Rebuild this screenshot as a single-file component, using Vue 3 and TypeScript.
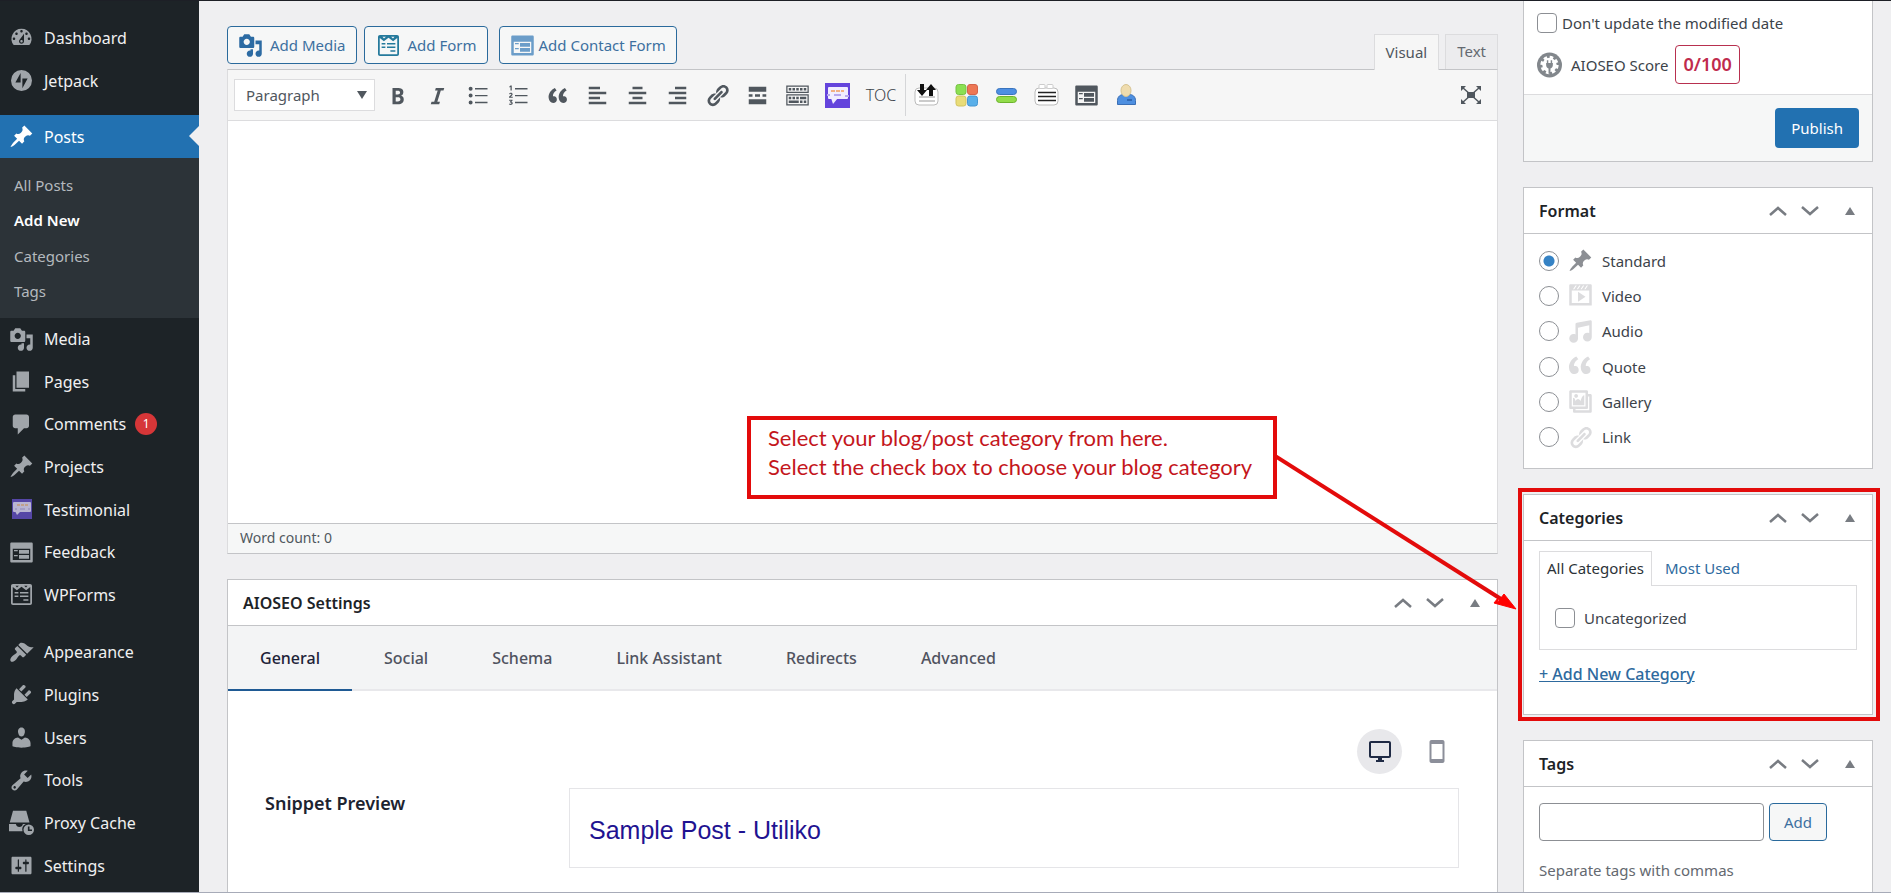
<script setup lang="ts">
import { ref } from 'vue'

interface MenuItem {
  label: string
  icon: string
  badge?: number
}

const paths: Record<string, string> = {
  dashboard:
    'M3.76 16h12.48A7.998 7.998 0 0 0 10 3a7.998 7.998 0 0 0-6.24 13zM10 4c.55 0 1 .45 1 1s-.45 1-1 1-1-.45-1-1 .45-1 1-1zM6 6c.55 0 1 .45 1 1s-.45 1-1 1-1-.45-1-1 .45-1 1-1zm8 0c.55 0 1 .45 1 1s-.45 1-1 1-1-.45-1-1 .45-1 1-1zm-5.37 5.55L12 7v6c0 1.1-.9 2-2 2s-2-.9-2-2c0-.57.24-1.08.63-1.45zM4 10c.55 0 1 .45 1 1s-.45 1-1 1-1-.45-1-1 .45-1 1-1zm12 0c.55 0 1 .45 1 1s-.45 1-1 1-1-.45-1-1 .45-1 1-1zm-5 3c0-.55-.45-1-1-1s-1 .45-1 1 .45 1 1 1 1-.45 1-1z',
  jetpack: 'M10 1.6a8.4 8.4 0 1 0 0 16.8 8.4 8.4 0 0 0 0-16.8zM9.3 11.6H5.1L9.3 4zm1.4 4.6V8.4h4.2z',
  pin:
    'M10.44 3.02l1.82-1.82 6.36 6.35-1.83 1.82c-1.05-.68-2.48-.57-3.41.36l-.75.75c-.92.93-1.04 2.35-.35 3.41l-1.83 1.82-2.41-2.41-2.8 2.79c-.42.42-3.38 2.71-3.8 2.29s1.86-3.39 2.28-3.81l2.79-2.79L4.1 9.36l1.83-1.82c1.05.69 2.48.57 3.4-.36l.75-.75c.93-.92 1.05-2.35.36-3.41z',
  media:
    'M13 11V4c0-.55-.45-1-1-1h-1.67L9 1H5L3.67 3H2c-.55 0-1 .45-1 1v7c0 .55.45 1 1 1h10c.55 0 1-.45 1-1zM7 4.5c1.38 0 2.5 1.12 2.5 2.5S8.38 9.5 7 9.5 4.5 8.38 4.5 7 5.62 4.5 7 4.5zM14 6h5v10.5c0 1.38-1.12 2.5-2.5 2.5S14 17.88 14 16.5s1.12-2.5 2.5-2.5c.17 0 .34.02.5.05V9h-3V6zm-4 8.05V13h2v3.5c0 1.38-1.12 2.5-2.5 2.5S7 17.88 7 16.5 8.12 14 9.5 14c.17 0 .34.02.5.05z',
  page: 'M6 15V2h10v13H6zm-1 1h8v2H3V5h2v11z',
  comment: 'M5 2h9c1.1 0 2 .9 2 2v7c0 1.1-.9 2-2 2h-2l-5 5v-5H5c-1.1 0-2-.9-2-2V4c0-1.1.9-2 2-2z',
  feedback:
    'M2 2h16c.55 0 1 .45 1 1v14c0 .55-.45 1-1 1H2c-.55 0-1-.45-1-1V3c0-.55.45-1 1-1zm15 14V7H3v9h14zM4 8v1h3V8H4zm4 0v3h8V8H8zm-4 4v1h3v-1H4zm4 0v3h8v-3H8z',
  wpforms:
    'M3.2 1.6h13.6c1 0 1.6.6 1.6 1.6v13.6c0 1-.6 1.6-1.6 1.6H3.2c-1 0-1.6-.6-1.6-1.6V3.2c0-1 .6-1.6 1.6-1.6zM3 4v13h14V4l-3.3 2.6L10 3.8 6.3 6.6zm2.2-1L6.4 4.4 7.9 3zm6.9 0 1.5 1.4L14.8 3zM4.5 8h3v1.2h-3zm4.3 0h6.7v1.2H8.8zM4.5 10.8h3V12h-3zm4.3 0h6.7V12H8.8zm2.7 2.9h4V15h-4z',
  appearance:
    'M14.48 11.06L7.41 3.99l1.5-1.5c.5-.56 2.3-.47 3.51.32 1.21.8 1.43 1.28 2.91 2.1 1.18.64 2.45 1.26 4.45.85zm-.71.71L6.7 4.7 4.93 6.47c-.39.39-.39 1.02 0 1.41l1.06 1.06c.39.39.39 1.03 0 1.42-.6.6-1.43 1.11-2.21 1.69-.35.26-.7.53-1.01.84C1.43 14.23.4 16.08 1.4 17.07c.99 1 2.84-.03 4.18-1.36.31-.31.58-.66.85-1.02.57-.78 1.08-1.61 1.69-2.21.39-.39 1.02-.39 1.41 0l1.06 1.06c.39.39 1.02.39 1.41 0z',
  plugin:
    'M13.11 4.36L9.87 7.6 8 5.73l3.24-3.24c.35-.34 1.05-.2 1.56.32.52.51.66 1.21.31 1.55zm-8 1.77l.91-1.12 9.01 9.01-1.19.84c-.71.71-2.63 1.16-3.82 1.16H6.14L4.9 17.26c-.59.59-1.54.59-2.12 0-.59-.58-.59-1.53 0-2.12l1.24-1.24v-3.88c0-1.13.4-3.19 1.09-3.89zm7.26 3.97l3.24-3.24c.34-.35 1.04-.21 1.55.31.52.51.66 1.21.31 1.55l-3.24 3.25z',
  user:
    'M10 9.25c-2.27 0-2.73-3.44-2.73-3.44C7 4.02 7.82 2 9.97 2c2.16 0 2.98 2.02 2.71 3.81 0 0-.41 3.44-2.68 3.44zm0 2.57L12.72 10c2.39 0 4.52 2.33 4.52 4.53v2.49s-3.65 1.13-7.24 1.13c-3.65 0-7.24-1.13-7.24-1.13v-2.49c0-2.25 1.94-4.48 4.47-4.48z',
  tools:
    'M16.68 9.77c-1.34 1.34-3.3 1.67-4.95.99l-5.41 6.52c-.99.99-2.59.99-3.58 0s-.99-2.59 0-3.57l6.52-5.42c-.68-1.65-.35-3.61.99-4.95 1.28-1.28 3.12-1.62 4.72-1.06l-2.89 2.89 2.82 2.82 2.86-2.87c.53 1.58.18 3.39-1.08 4.65zM3.81 16.21c.4.39 1.04.39 1.43 0 .4-.4.4-1.04 0-1.43-.39-.4-1.03-.4-1.43 0-.39.39-.39 1.03 0 1.43z',
  proxy:
    'M3.2 .6h10.6L16.4 10H.6zM0 11.2h5.5c.3 1.5 1.3 2.4 2.8 2.4s2.5-.9 2.8-2.4h2.3a5 5 0 0 0-2.6 5.8H0zM15.8 11.6a4.2 4.2 0 1 0 0 8.4 4.2 4.2 0 0 0 0-8.4zm-.7 1.6h1.3v2.4h2v1.2h-3.3z',
  settings:
    'M18 16V4c0-.55-.45-1-1-1H3c-.55 0-1 .45-1 1v12c0 .55.45 1 1 1h14c.55 0 1-.45 1-1zM8 11h1c.55 0 1 .45 1 1s-.45 1-1 1H8v1.5c0 .28-.22.5-.5.5s-.5-.22-.5-.5V13H6c-.55 0-1-.45-1-1s.45-1 1-1h1V5.5c0-.28.22-.5.5-.5s.5.22.5.5V11zm5-2h-1c-.55 0-1-.45-1-1s.45-1 1-1h1V5.5c0-.28.22-.5.5-.5s.5.22.5.5V7h1c.55 0 1 .45 1 1s-.45 1-1 1h-1v5.5c0 .28-.22.5-.5.5s-.5-.22-.5-.5V9z',
  bold:
    'M6 4v13h4.54c1.37 0 2.46-.33 3.26-1 .8-.66 1.2-1.58 1.2-2.77 0-.84-.17-1.51-.51-2.01s-.9-.85-1.67-1.03v-.09c.57-.1 1.02-.4 1.36-.9s.51-1.13.51-1.91c0-1.14-.39-1.98-1.17-2.5C12.75 4.26 11.5 4 9.78 4H6zm2.57 5.15V6.26h1.36c.73 0 1.27.11 1.61.32.34.22.51.58.51 1.07 0 .54-.16.92-.47 1.15s-.82.35-1.51.35h-1.5zm0 2.19h1.6c1.44 0 2.16.53 2.16 1.61 0 .6-.17 1.05-.51 1.34s-.86.43-1.57.43H8.57v-3.38z',
  italic: 'M14.78 6h-2.13l-2.8 9h2.12l-.62 2H4.6l.62-2h2.14l2.8-9H8.03l.62-2h6.75z',
  quote:
    'M9.49 13.22c0-.74-.2-1.38-.61-1.9-.62-.78-1.83-.88-2.53-.72-.29-1.65 1.11-3.75 2.92-4.65L7.88 4c-2.73 1.3-5.42 4.28-4.96 8.05C3.21 14.43 4.59 16 6.54 16c.85 0 1.56-.25 2.12-.75s.83-1.18.83-2.03zm8.05 0c0-.74-.2-1.38-.61-1.9-.63-.78-1.83-.88-2.53-.72-.29-1.65 1.11-3.75 2.92-4.65L15.93 4c-2.73 1.3-5.41 4.28-4.95 8.05.29 2.38 1.66 3.95 3.61 3.95.85 0 1.56-.25 2.12-.75s.83-1.18.83-2.03z',
  bullets:
    'M4.5 2.9a1.6 1.6 0 1 0 0 3.2 1.6 1.6 0 0 0 0-3.2zM8 4h10v1.1H8zM4.5 8.4a1.6 1.6 0 1 0 0 3.2 1.6 1.6 0 0 0 0-3.2zM8 9.5h10v1.1H8zM4.5 13.9a1.6 1.6 0 1 0 0 3.2 1.6 1.6 0 0 0 0-3.2zM8 15h10v1.1H8z',
  numbers:
    'M4.4 2h1v4h-1V3.2l-.9.3v-.8zM8 4h10v1.1H8zM3.3 8.5c.3-.6.8-.8 1.4-.8.9 0 1.4.5 1.4 1.2 0 .8-.8 1.3-1.5 2h1.6v.8H3.2v-.7c.8-.8 1.9-1.5 1.9-2 0-.6-.8-.6-1.2.1zM8 9.5h10v1.1H8zM3.3 13.3h2.7v.8l-.9.9c.7.1 1.1.5 1.1 1.2 0 1.4-2.2 1.7-3.1.8l.4-.7c.5.5 1.6.5 1.6-.1 0-.5-.5-.6-1.2-.6V15l.8-.9H3.3zM8 15h10v1.1H8z',
  left: 'M12 5V3H3v2h9zm5 4V7H3v2h14zm-5 4v-2H3v2h9zm5 4v-2H3v2h14z',
  center: 'M14 5V3H6v2h8zm3 4V7H3v2h14zm-3 4v-2H6v2h8zm3 4v-2H3v2h14z',
  right: 'M17 5V3H8v2h9zm0 4V7H3v2h14zm0 4v-2H8v2h9zm0 4v-2H3v2h14z',
  link:
    'M17.74 2.76c1.68 1.69 1.68 4.41 0 6.1l-1.53 1.52c-1.12 1.12-2.7 1.47-4.14 1.09l2.62-2.61.76-.77.76-.76c.84-.84.84-2.2 0-3.04-.84-.85-2.2-.85-3.04 0l-.77.76-3.38 3.38c-.37-1.44-.02-3.02 1.1-4.14l1.52-1.53c1.69-1.68 4.42-1.68 6.1 0zM8.59 13.43l5.34-5.34c.42-.42.42-1.1 0-1.52-.44-.43-1.13-.39-1.53 0l-5.33 5.34c-.42.42-.42 1.1 0 1.52.44.43 1.13.39 1.52 0zm-.76 2.29l4.14-4.15c.38 1.44.03 3.02-1.09 4.14l-1.52 1.53c-1.69 1.68-4.41 1.68-6.1 0-1.68-1.68-1.68-4.42 0-6.1l1.53-1.52c1.12-1.12 2.7-1.47 4.14-1.1l-4.14 4.15c-.85.84-.85 2.2 0 3.05.84.84 2.2.84 3.04 0z',
  more: 'M17 7V3H3v4h14zM6 11V9H3v2h3zm6 0V9H8v2h4zm5 0V9h-3v2h3zm0 6v-4H3v4h14z',
  kitchensink:
    'M19 2v6H1V2h18zm-1 5V3H2v4h16zM5 4v2H3V4h2zm3 0v2H6V4h2zm3 0v2H9V4h2zm3 0v2h-2V4h2zm3 0v2h-2V4h2zm2 5v9H1V9h18zm-1 8v-7H2v7h16zM5 11v2H3v-2h2zm3 0v2H6v-2h2zm3 0v2H9v-2h2zm6 0v2h-5v-2h5zm-6 3v2H3v-2h8zm3 0v2h-2v-2h2zm3 0v2h-2v-2h2z',
  video:
    'M2 1h16c.55 0 1 .45 1 1v16l-18-.02V2c0-.55.45-1 1-1zm4 1L4 5h1l2-3H6zm4 0H9L7 5h1zm3 0h-1l-2 3h1zm3 0h-1l-2 3h1zm1 14V6H3v10h14zM8 7l6 4-6 4V7z',
  audio:
    'M6.99 3.08l11.02-2c.55-.08.99.45.99 1V14.5c0 1.94-1.57 3.5-3.5 3.5S12 16.44 12 14.5c0-1.93 1.57-3.5 3.5-3.5.54 0 1.04.14 1.5.35V5.08l-9 2V16c-.24 1.7-1.74 3-3.5 3C2.57 19 1 17.44 1 15.5 1 13.57 2.57 12 4.5 12c.54 0 1.04.14 1.5.35V4.08c0-.55.44-.91.99-1z',
  bigquote:
    'M8.54 12.74c0-.87-.24-1.61-.72-2.22-.73-.92-2.14-1.03-2.96-.85-.34-1.93 1.3-4.39 3.42-5.45L6.65 1.94C3.45 3.46.31 6.96.85 11.37 1.19 14.16 2.8 16 5.08 16c1 0 1.83-.29 2.48-.88.66-.59.98-1.38.98-2.38zm9.43 0c0-.87-.24-1.61-.72-2.22-.73-.92-2.14-1.03-2.96-.85-.34-1.93 1.3-4.39 3.42-5.45l-1.63-2.28c-3.2 1.52-6.34 5.02-5.8 9.43.34 2.79 1.95 4.63 4.23 4.63 1 0 1.83-.29 2.48-.88.66-.59.98-1.38.98-2.38z',
  gallery:
    'M16 4h1.96c.57 0 1.04.47 1.04 1.04v12.92c0 .57-.47 1.04-1.04 1.04H5.04C4.47 19 4 18.53 4 17.96V16H2.04C1.47 16 1 15.53 1 14.96V2.04C1 1.47 1.47 1 2.04 1h12.92c.57 0 1.04.47 1.04 1.04V4zM3 14h11V3H3v11zm5-8.5C8 4.67 7.33 4 6.5 4S5 4.67 5 5.5 5.67 7 6.5 7 8 6.33 8 5.5zm2 4.5s1-5 3-5v8H4V7c2 0 2 3 2 3s.33-2 2-2 2 2 2 2zm7 7V6h-1v8.96c0 .57-.47 1.04-1.04 1.04H6v1h11z',
}

const topMenu: MenuItem[] = [
  { label: 'Dashboard', icon: 'dashboard' },
  { label: 'Jetpack', icon: 'jetpack' },
]
const subMenu = ['All Posts', 'Add New', 'Categories', 'Tags']
const contentMenu: MenuItem[] = [
  { label: 'Media', icon: 'media' },
  { label: 'Pages', icon: 'page' },
  { label: 'Comments', icon: 'comment', badge: 1 },
  { label: 'Projects', icon: 'pin' },
  { label: 'Testimonial', icon: 'testimonial' },
  { label: 'Feedback', icon: 'feedback' },
  { label: 'WPForms', icon: 'wpforms' },
]
const adminMenu: MenuItem[] = [
  { label: 'Appearance', icon: 'appearance' },
  { label: 'Plugins', icon: 'plugin' },
  { label: 'Users', icon: 'user' },
  { label: 'Tools', icon: 'tools' },
  { label: 'Proxy Cache', icon: 'proxy' },
  { label: 'Settings', icon: 'settings' },
]
const tools = [
  { icon: 'bold', name: 'Bold' },
  { icon: 'italic', name: 'Italic' },
  { icon: 'bullets', name: 'Bulleted list' },
  { icon: 'numbers', name: 'Numbered list' },
  { icon: 'quote', name: 'Blockquote' },
  { icon: 'left', name: 'Align left' },
  { icon: 'center', name: 'Align center' },
  { icon: 'right', name: 'Align right' },
  { icon: 'link', name: 'Insert link' },
  { icon: 'more', name: 'Insert Read More tag' },
  { icon: 'kitchensink', name: 'Toolbar toggle' },
]
const seoTabs = ['General', 'Social', 'Schema', 'Link Assistant', 'Redirects', 'Advanced']
const formats = [
  { label: 'Standard', icon: 'pin' },
  { label: 'Video', icon: 'video' },
  { label: 'Audio', icon: 'audio' },
  { label: 'Quote', icon: 'bigquote' },
  { label: 'Gallery', icon: 'gallery' },
  { label: 'Link', icon: 'link' },
]

const block = ref('Paragraph')
const seoTab = ref('General')
const format = ref('Standard')
const keepDate = ref(false)
const uncategorized = ref(false)
const newTag = ref('')
const content = ref('')
</script>

<template>
  <div class="admin">
    <nav class="side" aria-label="Main menu">
      <ul class="group first">
        <li v-for="item in topMenu" :key="item.label">
          <a href="#" class="item">
            <svg class="ico" viewBox="0 0 20 20"><path fill-rule="evenodd" :d="paths[item.icon]" /></svg>
            <span>{{ item.label }}</span>
          </a>
        </li>
      </ul>
      <a href="#" class="item current">
        <svg class="ico" viewBox="0 0 20 20"><path :d="paths.pin" /></svg>
        <span>Posts</span>
      </a>
      <ul class="sub">
        <li v-for="s in subMenu" :key="s">
          <a href="#" :class="{ on: s === 'Add New' }">{{ s }}</a>
        </li>
      </ul>
      <ul class="group content-group">
        <li v-for="item in contentMenu" :key="item.label">
          <a href="#" class="item">
            <svg v-if="item.icon === 'testimonial'" class="ico" viewBox="0 0 25 25">
              <rect x="3" y="2" width="20" height="20" fill="#5546a6" />
              <rect x="4" y="5" width="18" height="10" rx="1" fill="#b9b5d2" />
              <path d="M6 14h6l-4 4z" fill="#b9b5d2" />
              <path d="M8 8h11" stroke="#c0a08c" stroke-width="2" stroke-dasharray="3 1" />
              <path d="M6 12h2M11 12h5M19 12h2" stroke="#8d87b8" />
            </svg>
            <svg v-else class="ico" viewBox="0 0 20 20"><path fill-rule="evenodd" :d="paths[item.icon]" /></svg>
            <span>{{ item.label }}</span>
            <span v-if="item.badge" class="badge">{{ item.badge }}</span>
          </a>
        </li>
      </ul>
      <ul class="group admin-group">
        <li v-for="item in adminMenu" :key="item.label">
          <a href="#" class="item">
            <svg class="ico" viewBox="0 0 20 20"><path fill-rule="evenodd" :d="paths[item.icon]" /></svg>
            <span>{{ item.label }}</span>
          </a>
        </li>
      </ul>
    </nav>

    <main class="main">
      <div class="editor-head">
        <div class="inserts">
          <button type="button" class="btn">
            <svg class="ico" viewBox="0 0 20 20"><path fill-rule="evenodd" :d="paths.media" /></svg>Add Media
          </button>
          <button type="button" class="btn form">
            <svg class="ico teal" viewBox="0 0 20 20"><path fill-rule="evenodd" :d="paths.wpforms" /></svg>Add Form
          </button>
          <button type="button" class="btn contact">
            <svg class="ico pale" viewBox="0 0 20 20"><path fill-rule="evenodd" :d="paths.feedback" /></svg>Add Contact Form
          </button>
        </div>
        <div class="modes">
          <button type="button" class="mode active">Visual</button>
          <button type="button" class="mode">Text</button>
        </div>
      </div>

      <section class="editor" aria-label="Post content">
        <div class="toolbar">
          <div class="block-select">
            <select v-model="block" aria-label="Block format">
              <option>Paragraph</option>
              <option>Heading 1</option>
              <option>Heading 2</option>
            </select>
            <svg viewBox="0 0 10 8"><path d="M0 0h10L5 8z" /></svg>
          </div>
          <button v-for="t in tools" :key="t.icon" type="button" class="tool" :aria-label="t.name">
            <svg viewBox="0 0 20 20"><path fill-rule="evenodd" :d="paths[t.icon]" /></svg>
          </button>
          <button type="button" class="tool" aria-label="Testimonial">
            <svg viewBox="0 0 25 25">
              <rect width="25" height="25" fill="#6444dc" />
              <rect x="3" y="4" width="20" height="12" rx="1" fill="#f1edff" />
              <path d="M6 15h7l-5 6z" fill="#f1edff" />
              <path d="M6 8h13" stroke="#f2b184" stroke-width="2" stroke-dasharray="4 1" />
              <path d="M2 12h3M9 12h7M20 13h4" stroke="#b7a7ee" stroke-width="2" />
            </svg>
          </button>
          <button type="button" class="tool toc">TOC</button>
          <span class="sep"></span>
          <button type="button" class="tool" aria-label="Accordion">
            <svg viewBox="0 0 25 25">
              <rect x="1" y="5" width="23" height="17" rx="4" fill="#fff" stroke="#bbb" />
              <path d="M5 14h16M5 18h16" stroke="#bbb" stroke-width="1.5" />
              <path d="M6 1h4v6h3l-5 6-5-6h3zM15 13V7h-3l5-6 5 6h-3v6z" fill="#111" />
            </svg>
          </button>
          <button type="button" class="tool" aria-label="Columns">
            <svg viewBox="0 0 25 25">
              <rect x="2" y="1.5" width="10" height="10" rx="2.5" fill="#8be052" stroke="#76c244" />
              <rect x="13.5" y="1.5" width="10" height="10" rx="2.5" fill="#ed7754" stroke="#d4634a" />
              <rect x="2" y="13" width="10" height="10" rx="2.5" fill="#e9dc78" stroke="#d2c45f" />
              <rect x="13.5" y="13" width="10" height="10" rx="2.5" fill="#59afe9" stroke="#4696d0" />
            </svg>
          </button>
          <button type="button" class="tool" aria-label="Buttons">
            <svg viewBox="0 0 25 25">
              <rect x="2.5" y="5.5" width="20" height="6" rx="3" fill="#4d8fe3" stroke="#3a74bd" />
              <rect x="2.5" y="13.5" width="20" height="6" rx="3" fill="#92dc4a" stroke="#6cb32d" />
            </svg>
          </button>
          <button type="button" class="tool" aria-label="Notes">
            <svg viewBox="0 0 25 25">
              <rect x="1" y="5" width="23" height="17" rx="4" fill="#fff" stroke="#bbb" />
              <rect x="5" y="1.5" width="6" height="4" rx="1" fill="#fff" stroke="#ccc" />
              <rect x="13" y="1.5" width="6" height="4" rx="1" fill="#fff" stroke="#ccc" />
              <path d="M4 9.5h18M4 13.5h18M4 17.5h18" stroke="#222" stroke-width="1.5" />
            </svg>
          </button>
          <button type="button" class="tool" aria-label="Contact form">
            <svg viewBox="0 0 20 20"><path fill-rule="evenodd" :d="paths.feedback" /></svg>
          </button>
          <button type="button" class="tool" aria-label="Members">
            <svg viewBox="0 0 25 25">
              <path d="M3.5 21.5v-4c0-4 3-6 6-6h6c3 0 6 2 6 6v4z" fill="#4e8fe0" stroke="#3b6fb5" />
              <ellipse cx="12" cy="7.5" rx="5" ry="6" fill="#efdcae" stroke="#d6c391" />
              <path d="M13 17h5" stroke="#2a5ca5" stroke-width="1.5" />
            </svg>
          </button>
          <button type="button" class="tool full" aria-label="Distraction-free mode">
            <svg viewBox="0 0 22 20">
              <path d="M7 7h8v6H7z" />
              <path d="M2 2l18 16M20 2L2 18" fill="none" stroke="#50575e" stroke-width="1.5" />
              <path d="M1 1h5L1 6zM21 1v5l-5-5zM1 19v-5l5 5zM21 19h-5l5-5z" />
            </svg>
          </button>
        </div>
        <textarea v-model="content" class="canvas" aria-label="Content"></textarea>
        <div class="status">Word count: 0</div>
      </section>

      <section class="postbox">
        <header>
          <h2>AIOSEO Settings</h2>
          <div class="order">
            <button type="button" aria-label="Move up"><svg viewBox="0 0 18 10"><path d="M1 9l8-7 8 7" /></svg></button>
            <button type="button" aria-label="Move down"><svg viewBox="0 0 18 10"><path d="M1 1l8 7 8-7" /></svg></button>
            <button type="button" class="toggle" aria-label="Toggle panel"><svg viewBox="0 0 10 8"><path d="M0 8h10L5 0z" /></svg></button>
          </div>
        </header>
        <div class="seo-tabs" role="tablist">
          <button
            v-for="t in seoTabs"
            :key="t"
            type="button"
            role="tab"
            :aria-selected="t === seoTab"
            :class="{ on: t === seoTab }"
            @click="seoTab = t"
          >{{ t }}</button>
        </div>
        <div class="snippet">
          <div class="devices">
            <button type="button" class="device on" aria-label="Desktop">
              <svg viewBox="0 0 24 22" width="24" height="22"><path fill-rule="evenodd" d="M3 0h18c1.2 0 2 .8 2 2v13c0 1.2-.8 2-2 2h-7v2h2v2H8v-2h2v-2H3c-1.2 0-2-.8-2-2V2c0-1.200.8-2 2-2zm0 2v13h18V2z" /></svg>
            </button>
            <button type="button" class="device" aria-label="Mobile">
              <svg viewBox="0 0 16 23" width="16" height="23"><path fill-rule="evenodd" d="M2.5 0h11c1.2 0 2 .8 2 2v19c0 1.200-.8 2-2 2h-11c-1.200 0-2-.8-2-2V2c0-1.200.8-2 2-2zM2.5 4v15h11V4z" /></svg>
            </button>
          </div>
          <h3>Snippet Preview</h3>
          <div class="preview">Sample Post - Utiliko</div>
        </div>
      </section>

      <aside class="callout">
        <p>Select your blog/post category from here.</p>
        <p>Select the check box to choose your blog category</p>
        <svg class="arrow" viewBox="0 0 244 160" width="244" height="160">
          <path d="M0 2L226 145" fill="none" stroke="#e30b0b" stroke-width="4" />
          <path d="M241 155L219 149L223 144L222 149L229 140z" fill="#f00" stroke="#f00" stroke-width="1" />
        </svg>
      </aside>
    </main>

    <aside class="meta">
      <section class="postbox publish">
        <div class="publish-body">
          <label class="date"><input v-model="keepDate" type="checkbox" /><span>Don't update the modified date</span></label>
          <div class="score">
            <svg viewBox="0 0 26 26">
              <circle cx="13" cy="13" r="13" fill="#82878c" />
              <circle cx="13" cy="13" r="7.5" fill="#fff" />
              <circle cx="13" cy="13" r="8" fill="none" stroke="#fff" stroke-width="3" stroke-dasharray="3.6 2.68" />
              <path d="M11 8v3M15 8v3" stroke="#82878c" stroke-width="1.5" />
              <path d="M9.5 11h7v2c0 2-1 3.300-2.500 3.700V22h-2v-5.300c-1.500-.4-2.500-1.700-2.500-3.700z" fill="#82878c" />
            </svg>
            <span>AIOSEO Score</span>
            <b>0/100</b>
          </div>
        </div>
        <footer><button type="button" class="primary">Publish</button></footer>
      </section>

      <section class="postbox">
        <header>
          <h2>Format</h2>
          <div class="order">
            <button type="button" aria-label="Move up"><svg viewBox="0 0 18 10"><path d="M1 9l8-7 8 7" /></svg></button>
            <button type="button" aria-label="Move down"><svg viewBox="0 0 18 10"><path d="M1 1l8 7 8-7" /></svg></button>
            <button type="button" class="toggle" aria-label="Toggle panel"><svg viewBox="0 0 10 8"><path d="M0 8h10L5 0z" /></svg></button>
          </div>
        </header>
        <div class="formats">
          <label v-for="f in formats" :key="f.label" :class="{ on: f.label === format }">
            <input v-model="format" type="radio" name="format" :value="f.label" />
            <svg class="ico" viewBox="0 0 20 20"><path fill-rule="evenodd" :d="paths[f.icon]" /></svg>
            <span>{{ f.label }}</span>
          </label>
        </div>
      </section>

      <section class="postbox framed">
        <header>
          <h2>Categories</h2>
          <div class="order">
            <button type="button" aria-label="Move up"><svg viewBox="0 0 18 10"><path d="M1 9l8-7 8 7" /></svg></button>
            <button type="button" aria-label="Move down"><svg viewBox="0 0 18 10"><path d="M1 1l8 7 8-7" /></svg></button>
            <button type="button" class="toggle" aria-label="Toggle panel"><svg viewBox="0 0 10 8"><path d="M0 8h10L5 0z" /></svg></button>
          </div>
        </header>
        <div class="cats">
          <div class="cat-tabs">
            <a href="#" class="on">All Categories</a>
            <a href="#">Most Used</a>
          </div>
          <div class="cat-list">
            <label><input v-model="uncategorized" type="checkbox" /><span>Uncategorized</span></label>
          </div>
          <a href="#" class="add-cat">+ Add New Category</a>
        </div>
      </section>

      <section class="postbox tags">
        <header>
          <h2>Tags</h2>
          <div class="order">
            <button type="button" aria-label="Move up"><svg viewBox="0 0 18 10"><path d="M1 9l8-7 8 7" /></svg></button>
            <button type="button" aria-label="Move down"><svg viewBox="0 0 18 10"><path d="M1 1l8 7 8-7" /></svg></button>
            <button type="button" class="toggle" aria-label="Toggle panel"><svg viewBox="0 0 10 8"><path d="M0 8h10L5 0z" /></svg></button>
          </div>
        </header>
        <div class="tag-body">
          <div class="tag-row">
            <input v-model="newTag" type="text" aria-label="Add new tag" />
            <button type="button" class="btn">Add</button>
          </div>
          <p>Separate tags with commas</p>
        </div>
      </section>
    </aside>
  </div>
</template>

<style>
body {
  margin: 0;
  background: #efeff1;
}
</style>

<style scoped>
.admin {
  box-sizing: border-box;
  display: grid;
  grid-template-columns: 199px minmax(0, 1fr) 350px;
  height: 100vh;
  overflow: hidden;
  border-top: 1px solid #1d1f26;
  border-bottom: 1px solid #a7abb8;
  padding-right: 18px;
  font-family: 'Noto Sans', 'Open Sans', sans-serif;
  font-size: 15px;
  line-height: 20px;
  color: #3c434a;
}
*, *::before, *::after { box-sizing: border-box; }
ul, p, h2, h3 { margin: 0; padding: 0; list-style: none; }
a { text-decoration: none; color: #2e6a9e; }
button, input, select, textarea { font: inherit; color: inherit; margin: 0; }
button { background: none; border: 0; padding: 0; cursor: pointer; white-space: nowrap; }
svg { display: block; flex: none; }
.ico { width: 25px; height: 25px; fill: currentColor; }

.side { background: #1d2327; padding-top: 15px; }
.group { display: grid; grid-auto-rows: 1fr; }
.first { height: 86px; margin-bottom: 13px; }
.content-group { height: 298px; margin-bottom: 15px; }
.admin-group { height: 256px; }
.item {
  display: flex;
  align-items: center;
  height: 100%;
  padding-left: 9px;
  gap: 10px;
  font-size: 16px;
  color: #f0f0f1;
}
.item .ico { color: #a0a5aa; }
.current { position: relative; height: 43px; background: #2271b1; color: #fff; }
.current .ico { color: #fff; }
.current::after {
  content: '';
  position: absolute;
  right: 0;
  top: 11px;
  border: 10px solid transparent;
  border-right-color: #efeff1;
  border-left-width: 0;
}
.badge {
  width: 22px;
  height: 22px;
  margin-left: -1px;
  border-radius: 11px;
  background: #d63638;
  color: #fff;
  font-size: 12px;
  line-height: 22px;
  text-align: center;
}
.sub { display: grid; grid-auto-rows: 1fr; height: 160px; padding: 9px 0; background: #2c3338; }
.sub a { display: flex; align-items: center; height: 100%; padding-left: 14px; color: #b4b9be; }
.sub .on { color: #fff; font-weight: 600; }

.main { position: relative; padding: 25px 25px 0 28px; }
.editor-head { display: flex; justify-content: space-between; align-items: flex-end; height: 43px; }
.inserts { display: flex; align-self: flex-start; gap: 7px; }
.btn {
  display: flex;
  align-items: center;
  gap: 7px;
  height: 38px;
  padding: 0 10px;
  border: 1px solid #2a6a9c;
  border-radius: 4px;
  background: #f6f7f7;
  color: #3d709f;
}
.btn .ico { color: #2c6ba3; }
.btn .teal { color: #257a9c; }
.btn .pale { color: #6b9dc9; }
.btn.form { padding-left: 11px; }
.btn.contact { margin-left: 4px; gap: 4px; }
.modes { display: flex; gap: 6px; }
.mode {
  height: 35px;
  padding: 0 11px 2px;
  border: 1px solid #dcdcde;
  border-bottom: 0;
  background: #ececee;
  color: #646970;
}
.active { position: relative; height: 36px; margin-bottom: -1px; background: #f6f6f6; color: #50575e; }

.editor { display: flex; flex-direction: column; border: 1px solid #dcdcde; border-color: #c3c4c7 #dcdcde; }
.toolbar {
  display: flex;
  align-items: center;
  height: 51px;
  padding: 0 6px;
  background: #f6f6f6;
  border-bottom: 1px solid #dcdcde;
}
.block-select { position: relative; width: 141px; margin-right: 2px; }
.block-select select {
  display: block;
  width: 100%;
  height: 32px;
  padding: 0 11px;
  border: 1px solid #dcdcde;
  border-radius: 0;
  background: #fff;
  color: #50575e;
  appearance: none;
}
.block-select svg { position: absolute; right: 8px; top: 12px; width: 10px; height: 8px; fill: #50575e; }
.tool { display: grid; place-items: center; flex: none; width: 40px; height: 40px; }
.tool svg { width: 25px; height: 25px; fill: #50575e; }
.tool.toc { width: 48px; font-size: 16px; font-weight: 300; color: #3c434a; }
.sep { width: 1px; height: 42px; background: #d5d6d8; }
.full { margin-left: auto; }
.tool.full svg { width: 22px; height: 20px; }
.canvas { display: block; width: 100%; height: 402px; border: 0; background: #fff; resize: none; outline: 0; }
.status {
  height: 30px;
  padding: 0 12px;
  border-top: 1px solid #c3c4c7;
  background: #f6f7f7;
  font-size: 14px;
  line-height: 28px;
  color: #50575e;
}

.postbox { border: 1px solid #c3c4c7; background: #fff; }
.main .postbox { margin-top: 25px; }
.postbox header {
  display: flex;
  align-items: center;
  justify-content: space-between;
  height: 46px;
  padding: 0 15px;
  border-bottom: 1px solid #c3c4c7;
}
h2 { font-size: 16px; font-weight: 600; color: #1d2327; }
.order { display: flex; align-items: center; color: #787c82; }
.order button { display: grid; place-items: center; width: 32px; height: 32px; }
.order svg { width: 18px; height: 10px; fill: none; stroke: currentColor; stroke-width: 2.5; }
.order .toggle { width: 15px; margin-left: 16px; }
.order .toggle svg { width: 10px; height: 8px; fill: currentColor; stroke: none; }

.seo-tabs { display: flex; height: 65px; background: #f3f4f5; border-bottom: 2px solid #e8e8eb; }
.seo-tabs button {
  height: 65px;
  padding: 0 32px;
  border-bottom: 2px solid transparent;
  font-size: 16px;
  font-weight: 500;
  color: #50535f;
}
.seo-tabs .on { border-bottom-color: #1f5a94; color: #1d2238; }
.snippet {
  display: grid;
  grid-template-columns: 304px minmax(0, 1fr);
  padding: 38px 38px 40px 37px;
}
.devices { grid-column: 1 / -1; display: flex; justify-content: flex-end; gap: 12px; margin-bottom: 14px; }
.device { display: grid; place-items: center; width: 45px; height: 45px; border-radius: 50%; fill: #8c8f9a; }
.device.on { background: #e8e8eb; fill: #1f2a44; }
h3 { padding-top: 5px; font-size: 18px; font-weight: 600; color: #1d2330; }
.preview {
  height: 80px;
  padding: 0 19px;
  border: 1px solid #e5e5e8;
  font-family: 'Liberation Sans', Arial, sans-serif;
  font-size: 25px;
  line-height: 82px;
  color: #1f1391;
}

.callout {
  position: absolute;
  right: 246px;
  top: 415px;
  width: 530px;
  height: 83px;
  padding: 3px 17px;
  border: 4px solid #e30b0b;
  background: #fff;
  font-family: Lato, sans-serif;
  font-size: 22px;
  line-height: 29px;
  color: #c4161c;
  white-space: nowrap;
}
.arrow { position: absolute; left: 524px; top: 34px; }

.meta { display: flex; flex-direction: column; gap: 25px; }
.publish { border-top: 0; }
.publish-body { height: 94px; padding: 12px 13px 0; border-bottom: 1px solid #dcdcde; }
.date { display: flex; align-items: center; gap: 5px; height: 20px; }
input[type='checkbox'], input[type='radio'] {
  flex: none;
  appearance: none;
  width: 20px;
  height: 20px;
  border: 1px solid #8c8f94;
  border-radius: 4px;
  background: #fff;
}
input[type='radio'] { border-radius: 50%; }
input[type='checkbox']:checked { background: #2271b1; }
input[type='radio']:checked { background: radial-gradient(circle, #3582c4 5px, #fff 6px); }
.score { display: flex; align-items: center; height: 39px; margin-top: 12px; }
.score svg { width: 25px; height: 26px; margin-right: 9px; }
.score b {
  margin-left: 7px;
  padding: 0 7px;
  border: 1px solid #b8304f;
  border-radius: 4px;
  font-size: 18px;
  font-weight: 600;
  line-height: 37px;
  color: #c02b4d;
}
.publish footer { display: flex; justify-content: flex-end; padding: 13px; background: #f6f7f7; }
.primary { height: 40px; padding: 0 16px; border-radius: 4px; background: #2271b1; color: #fff; }

.formats { display: grid; grid-auto-rows: 1fr; height: 234px; padding: 9px 15px 13px; }
.formats label { display: flex; align-items: center; gap: 9px; }
.formats .ico { color: #dcdcde; }
.formats .on .ico { color: #8c8f94; }

.framed { position: relative; height: 221px; }
.framed::after {
  content: '';
  position: absolute;
  inset: -7px -8px -7px -6px;
  border: 4px solid #e30b0b;
  pointer-events: none;
}
.cats { padding: 10px 15px 0; }
.cat-tabs { display: flex; height: 35px; margin-bottom: -1px; }
.cat-tabs a { padding: 0 13px; line-height: 34px; }
.cat-tabs .on {
  position: relative;
  padding: 0 7px;
  border: 1px solid #dcdcde;
  border-bottom: 0;
  background: #fff;
  color: #2c3338;
  line-height: 32px;
}
.cat-list { height: 65px; padding: 22px 15px; border: 1px solid #dcdcde; }
.cat-list label { display: flex; align-items: center; gap: 9px; height: 20px; }
.add-cat { display: inline-block; margin-top: 14px; font-size: 16px; font-weight: 500; text-decoration: underline; }

.tags { flex: none; }
.tag-body { padding: 16px 15px; }
.tag-row { display: flex; gap: 5px; }
.tag-row input { width: 225px; height: 38px; padding: 0 10px; border: 1px solid #8c8f94; border-radius: 4px; }
.tag-row .btn { padding: 0 14px; }
.tag-body p { margin-top: 19px; color: #646970; }
</style>
